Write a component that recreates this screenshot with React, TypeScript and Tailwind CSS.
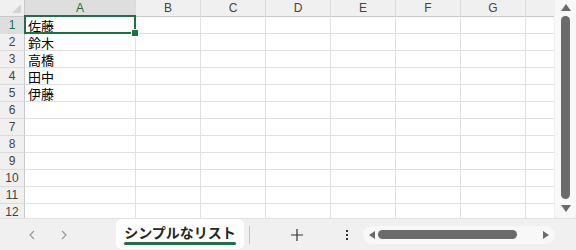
import React from "react";

const cols = ["A", "B", "C", "D", "E", "F", "G", ""];
const names = ["佐藤", "鈴木", "高橋", "田中", "伊藤"];
const rows = Array.from({ length: 12 }, (_, i) => i + 1);

export default function App() {
  return (
    <div
      className="w-[576px] h-[250px] bg-white flex flex-col overflow-hidden"
      style={{ fontFamily: '"Liberation Sans", "Noto Sans CJK JP", sans-serif' }}
    >
      <div className="flex h-[218px] overflow-hidden">
        <div className="relative w-[554px] overflow-hidden">
          <div className="grid grid-cols-[25px_111px_65px_65px_65px_65px_65px_65px_28px] auto-rows-[17px]">
            {/* corner */}
            <div className="relative bg-[#f0f0f0] border-r border-b border-[#c8c8c8]">
              <div className="absolute right-[3px] bottom-[3px] w-0 h-0 border-l-[9px] border-l-transparent border-b-[9px] border-b-[#d4d4d4]" />
            </div>
            {cols.map((c, i) => (
              <div
                key={i}
                className={`flex items-center justify-center text-[12px] leading-[16px] border-b border-[#c8c8c8] ${
                  i < 7 ? "border-r border-r-[#dcdcdc]" : ""
                } ${i === 0 ? "bg-[#dedede] text-[#1e6e42]" : "bg-[#f0f0f0] text-[#444]"}`}
              >
                {c}
              </div>
            ))}
            {rows.map((r) => (
              <React.Fragment key={r}>
                <div
                  className={`flex items-center justify-center text-[12px] leading-[16px] border-r border-[#c8c8c8] border-b border-b-[#dcdcdc] ${
                    r === 1 ? "bg-[#dedede] text-[#1e6e42]" : "bg-[#f0f0f0] text-[#444]"
                  }`}
                >
                  {r}
                </div>
                {cols.map((_, ci) => (
                  <div
                    key={ci}
                    className={`border-b border-[#e1e1e1] ${ci < 7 ? "border-r" : ""} flex items-center pl-[3px] text-[13px] text-black leading-[15px]`}
                    style={ci === 0 && r <= 5 ? { fontFamily: '"Noto Sans CJK JP", sans-serif' } : undefined}
                  >
                    {ci === 0 && r <= 5 ? names[r - 1] : null}
                  </div>
                ))}
              </React.Fragment>
            ))}
          </div>
          {/* selection */}
          <div className="absolute left-[24px] top-[15px] w-[112px] h-[19px] border-2 border-[#1e7145]" />
          <div className="absolute left-[132px] top-[30px] w-[6px] h-[6px] bg-[#1e7145] border border-white box-content -m-px" />
        </div>
        {/* vertical scrollbar */}
        <div className="w-[22px] bg-[#f0f0f0] flex">
          <div className="flex-1 ml-[1px] mb-[-2px] bg-[#f8f8f8] rounded-b-[8px] flex flex-col items-center pt-[4px]">
            <div className="w-0 h-0 border-l-[5px] border-r-[5px] border-b-[7px] border-l-transparent border-r-transparent border-b-[#6a6a6a]" />
            <div className="mt-[5px] w-[9px] h-[183px] bg-[#6b6b6b] rounded-full" />
            <div className="mt-[6px] w-0 h-0 border-l-[5px] border-r-[5px] border-t-[7px] border-l-transparent border-r-transparent border-t-[#6a6a6a]" />
          </div>
        </div>
      </div>
      {/* bottom bar */}
      <div className="h-[32px] bg-[#f0f0f0] border-t border-[#e2e2e2] flex items-center">
        <div className="w-[116px] flex items-center pl-[26px] gap-[20px] text-[#9a9a9a]">
          <svg width="12" height="12" viewBox="0 0 12 12" fill="none" stroke="currentColor" strokeWidth="1.2">
            <path d="M8 2 L4 6 L8 10" />
          </svg>
          <svg width="12" height="12" viewBox="0 0 12 12" fill="none" stroke="currentColor" strokeWidth="1.2">
            <path d="M4 2 L8 6 L4 10" />
          </svg>
        </div>
        <div className="relative w-[128px] h-[30px] -mt-[2px] bg-white rounded-[6px] flex items-center justify-center">
          <span
            className="text-[14px] font-bold text-[#262626] -mt-[3px]"
            style={{ fontFamily: '"Noto Sans CJK JP", sans-serif' }}
          >
            シンプルなリスト
          </span>
          <div className="absolute left-[8px] right-[8px] bottom-[4px] h-[3px] bg-[#1e7145] rounded-full" />
        </div>
        <div className="ml-[5px] w-px h-[18px] bg-[#c4c4c4]" />
        <div className="ml-[39px] w-[16px] flex items-center justify-center">
          <svg width="14" height="14" viewBox="0 0 14 14" stroke="#333" strokeWidth="1.2">
            <path d="M7 1 V13 M1 7 H13" />
          </svg>
        </div>
        <div className="ml-[41px] flex flex-col gap-[2px] items-center">
          <div className="w-[2px] h-[2px] bg-[#333]" />
          <div className="w-[2px] h-[2px] bg-[#333]" />
          <div className="w-[2px] h-[2px] bg-[#333]" />
        </div>
        <div className="ml-[15px] w-[192px] h-[18px] bg-[#f8f8f8] rounded-full flex items-center pl-[6px] pr-[6px]">
          <div className="w-0 h-0 border-t-[4px] border-b-[4px] border-r-[6px] border-t-transparent border-b-transparent border-r-[#6a6a6a]" />
          <div className="ml-[3px] w-[139px] h-[9px] bg-[#6b6b6b] rounded-full" />
          <div className="ml-auto w-0 h-0 border-t-[4px] border-b-[4px] border-l-[6px] border-t-transparent border-b-transparent border-l-[#6a6a6a]" />
        </div>
      </div>
    </div>
  );
}
